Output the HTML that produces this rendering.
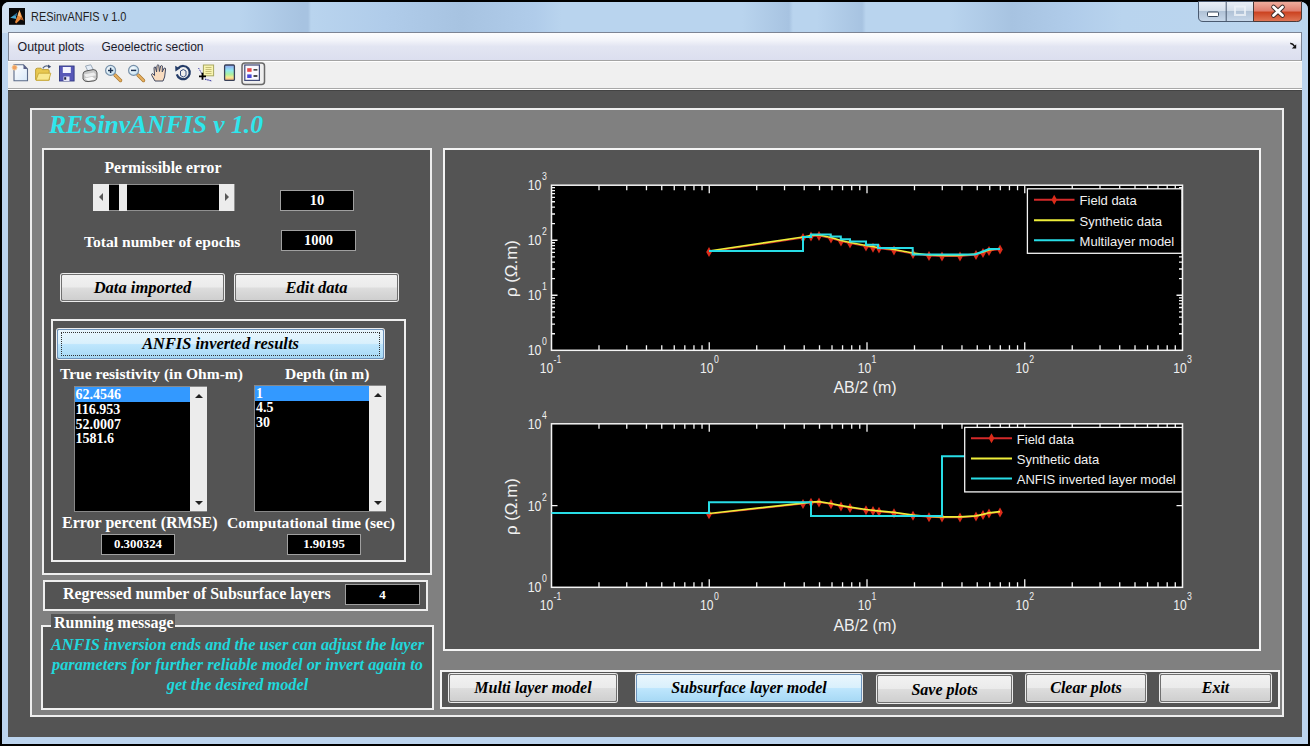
<!DOCTYPE html>
<html><head><meta charset="utf-8">
<style>
*{margin:0;padding:0;box-sizing:border-box}
html,body{width:1310px;height:746px;overflow:hidden;background:#000}
body{position:relative;font-family:"Liberation Sans",sans-serif}
.a{position:absolute}
.serif{font-family:"Liberation Serif",serif;font-weight:bold}
.w{color:#fff}
.btn{position:absolute;border:1px solid #707070;border-radius:2px;box-shadow:0 0 0 1px #ececec;
 background:linear-gradient(#f2f2f2 0%,#ebebeb 48%,#dddddd 52%,#cfcfcf 100%);
 font-family:"Liberation Serif",serif;font-weight:bold;font-style:italic;font-size:16px;color:#000;text-align:center;white-space:nowrap}
.edit{position:absolute;background:#000;border:1px solid #a0a0a0;color:#fff;font-family:"Liberation Serif",serif;font-weight:bold;text-align:center;white-space:nowrap}
.lbl{position:absolute;font-family:"Liberation Serif",serif;font-weight:bold;font-size:16px;color:#fff;white-space:nowrap;line-height:1}
</style></head><body>
<!-- window frame -->
<div class="a" style="left:1.5px;top:1.5px;width:1306.5px;height:742.5px;background:#bcd4ee;border-radius:7px 7px 0 0"></div>
<div class="a" style="left:2px;top:1.5px;width:1306px;height:31px;border-radius:7px 7px 0 0;background:linear-gradient(90deg,#d2e2f2 0px,#c4daf0 60px,#b9d4ee 130px,#b9d4ee 237px,#a7c3e1 300px,#a7c3e1 306px,#b9d4ee 309px,#b0ccea 383px,#a7c3e1 460px,#b0ccea 533px,#b9d4ee 560px,#b9d4ee 740px,#a7c3e1 787px,#b9d4ee 791px,#b9d4ee 815px,#a7c3e1 860px,#b9d4ee 864px,#b9d4ee 947px,#a7c3e1 1010px,#b0ccea 1070px,#b9d4ee 1120px,#bcd6ee 1306px)"></div>
<!-- title -->

<div class="a" style="left:30.5px;top:8.5px;font-size:13.5px;color:#1e1e1e;transform-origin:0 0;transform:scaleX(0.81)">RESinvANFIS v 1.0</div>
<!-- title buttons -->
<svg class="a" style="left:1190px;top:0" width="120" height="60">
<defs>
<linearGradient id="gmin" x1="0" y1="0" x2="0" y2="1"><stop offset="0" stop-color="#eaf0f7"/><stop offset=".45" stop-color="#d4dfeb"/><stop offset=".5" stop-color="#b0c2d6"/><stop offset="1" stop-color="#c8d8ea"/></linearGradient>
<linearGradient id="gcls" x1="0" y1="0" x2="0" y2="1"><stop offset="0" stop-color="#f0b0a0"/><stop offset=".45" stop-color="#e08070"/><stop offset=".55" stop-color="#cc4422"/><stop offset="1" stop-color="#e07858"/></linearGradient>
</defs>
<path d="M8.5 1.5 V17 Q8.5 21.5 13 21.5 H106.5 Q111.5 21.5 111.5 17 V1.5 Z" fill="url(#gmin)" stroke="#4a5a70" stroke-width="1"/>
<path d="M63.5 1.5 V21.5 H106.5 Q111.5 21.5 111.5 17 V1.5 Z" fill="url(#gcls)" stroke="#4a3a38" stroke-width="1"/>
<path d="M36.2 1.5 V21.5" stroke="#4a5a70" stroke-width="1"/>
<rect x="17.5" y="12" width="11" height="4.5" rx="1" fill="#fff" stroke="#3a4a5e" stroke-width="1"/>
<rect x="45" y="6.5" width="10" height="8.5" fill="none" stroke="#eef3f8" stroke-width="2" opacity=".8"/>
<path d="M83.5 7 L92.5 15.5 M92.5 7 L83.5 15.5" stroke="#3a2a28" stroke-width="4.6" stroke-linecap="round"/>
<path d="M83.5 7 L92.5 15.5 M92.5 7 L83.5 15.5" stroke="#ffffff" stroke-width="2.8" stroke-linecap="round"/>
</svg>
<!-- menu bar -->
<div class="a" style="left:8px;top:32px;width:1294px;height:28.5px;border:1px solid #7c8494;border-bottom:1.5px solid #a4a4a4;background:linear-gradient(#fdfdfe 0%,#f4f5fa 25%,#e2e5f2 50%,#dcdfef 100%)"></div>
<div class="a" style="left:17.5px;top:40px;font-size:12.4px;color:#1a1a2a">Output plots</div>
<div class="a" style="left:101.5px;top:40px;font-size:12px;color:#1a1a2a">Geoelectric section</div>
<svg class="a" style="left:1190px;top:0" width="120" height="60"><path d="M100.2 43.5 Q102.5 43 104.6 46.4" fill="none" stroke="#111" stroke-width="1.4"/>
<path d="M106.2 44.2 L106.2 48.6 L101.8 48.6 Z" fill="#111"/>
</svg>
<!-- toolbar -->
<div class="a" style="left:8px;top:60.5px;width:1294px;height:29.5px;background:#f0f0f0;border-top:1.2px solid #fff;border-bottom:1px solid #fff"></div><div class="a" style="left:8px;top:88px;width:1294px;height:1px;background:#a8a8a8"></div>
<div id="icons"><svg class="a" style="left:0;top:0" width="280" height="92">
<defs>
<linearGradient id="gpage" x1="0" y1="0" x2="1" y2="1"><stop offset="0" stop-color="#ffffff"/><stop offset="1" stop-color="#d8e8f8"/></linearGradient>
<linearGradient id="gfold" x1="0" y1="0" x2="0" y2="1"><stop offset="0" stop-color="#fff6b0"/><stop offset="1" stop-color="#e8c848"/></linearGradient>
<linearGradient id="gcb" x1="0" y1="0" x2="0" y2="1"><stop offset="0" stop-color="#8ea0f0"/><stop offset=".35" stop-color="#90e8f0"/><stop offset=".6" stop-color="#a8f0a0"/><stop offset=".8" stop-color="#f8e890"/><stop offset="1" stop-color="#f0a878"/></linearGradient>
<radialGradient id="glens" cx=".4" cy=".4" r=".7"><stop offset="0" stop-color="#ffffff"/><stop offset="1" stop-color="#b8dcf0"/></radialGradient>
</defs>
<!-- MATLAB icon -->
<rect x="9" y="8" width="16" height="16.8" fill="#0a0a0a"/>
<path d="M10.2 17.8 L15.6 14.2 L16.4 19 Z" fill="#4aa8d0"/>
<path d="M13.5 15.6 L17.2 12.4 L16.6 16 Z" fill="#2a6890"/>
<path d="M19.5 10 L23.6 20.6 L20.6 19.2 L16.2 23.4 L15 22.2 L17.6 15.4 Z" fill="#e88838"/>
<path d="M19.5 10 L21 17 L17.6 15.4 Z" fill="#f8c080"/>
<path d="M20.6 19.2 L23.6 20.6 L21 17 Z" fill="#a04818"/>
<!-- new -->
<path d="M14 64.8 H23.5 L27.5 69 V80.8 H14 Z" fill="url(#gpage)" stroke="#5a6a88" stroke-width="1.1"/>
<path d="M23.5 64.8 V69 H27.5 Z" fill="#5a6088"/>
<circle cx="14.6" cy="67.6" r="2.4" fill="#f0a060" stroke="#f8c890" stroke-width="1"/>
<!-- open -->
<path d="M35.6 70 Q35.6 68.2 37.4 68.2 H41 L42.2 69.6 H48 Q49.2 69.6 49.2 71 V80.2 H36.4 Q35.6 80.2 35.6 79 Z" fill="#e8c850" stroke="#b89830" stroke-width="0.9"/>
<path d="M36 80.2 L38.6 73.2 H50.8 L48.8 80.2 Z" fill="#f8e890" stroke="#c8a838" stroke-width="0.9"/>
<path d="M42.8 68.4 Q45 64.6 49 66.4" fill="none" stroke="#5a6a88" stroke-width="1.3"/>
<path d="M48 64.6 L51.2 66.8 L48.2 68.6 Z" fill="#3a4a70"/>
<!-- save -->
<rect x="59.5" y="66" width="14.6" height="15" fill="#5858b8" stroke="#303880" stroke-width="0.9"/>
<rect x="62.8" y="67" width="8" height="6" fill="#f4f4ff"/>
<rect x="63.5" y="76.5" width="6" height="4.5" fill="#e8e8f8"/>
<rect x="64.2" y="77.2" width="2" height="2.5" fill="#202040"/>
<!-- print -->
<path d="M85.5 66 L90.8 64.8 L93.6 70.2 L88 71.4 Z" fill="#e6eef8" stroke="#8898aa" stroke-width="0.8"/>
<path d="M83 74.2 Q83 71.6 86 71 L93.2 69.6 Q96.6 69.4 97 72.8 V77.6 Q97 80.2 94 80.9 L88 81.6 Q84 81.8 83 79 Z" fill="#c8c8c8" stroke="#4a4a4a" stroke-width="0.9"/>
<path d="M84 74.4 L93.8 72.4 L96.2 75.2 L86.2 77.2 Z" fill="#eeeeee"/>
<path d="M84.6 78.4 L92.2 76.8 L95.6 79.2 L88.2 80.8 Z" fill="#fafafa"/>
<!-- zoom in -->
<path d="M115 75 L120.5 80.5" stroke="#a87830" stroke-width="3.4" stroke-linecap="round"/>
<path d="M115 75 L120.5 80.5" stroke="#e8b060" stroke-width="2" stroke-linecap="round"/>
<circle cx="110.6" cy="70.4" r="5" fill="url(#glens)" stroke="#7890a8" stroke-width="1.2"/>
<path d="M108 70.4 H113.2 M110.6 67.8 V73" stroke="#1a3050" stroke-width="1.5"/>
<!-- zoom out -->
<path d="M138 75 L143.5 80.5" stroke="#a87830" stroke-width="3.4" stroke-linecap="round"/>
<path d="M138 75 L143.5 80.5" stroke="#e8b060" stroke-width="2" stroke-linecap="round"/>
<circle cx="133.6" cy="70.4" r="5" fill="url(#glens)" stroke="#7890a8" stroke-width="1.2"/>
<path d="M131 70.4 H136.2" stroke="#1a3050" stroke-width="1.5"/>
<!-- pan hand -->
<path d="M155 81 L151.8 75.5 Q151 73.8 152.6 73.6 L154.6 75.5 L154 68 Q154.2 66.6 155.4 67 L156.6 72 L157 65.6 Q157.6 64.4 158.8 65.2 L159.4 71.5 L160.6 66 Q161.4 65 162.4 66 L162.2 72 L164.2 68 Q165.4 67.6 165.6 69 L164.6 77 L163 81 Z" fill="#f8dcc0" stroke="#404860" stroke-width="1"/>
<!-- rotate -->
<path d="M178.2 68.2 A6.6 6.6 0 1 1 176.8 74.4" fill="none" stroke="#243c68" stroke-width="2.2"/>
<path d="M175.2 65.8 L180 68.6 L175.4 71.6 Z" fill="#243c68"/>
<path d="M180.5 71 L183.3 69.5 L186 71 V75.5 L183.3 77 L180.5 75.5 Z" fill="none" stroke="#3a5080" stroke-width="1"/>
<!-- data cursor -->
<rect x="203.4" y="65" width="10.2" height="10.8" fill="#f8f4b0" stroke="#a8a860" stroke-width="1"/>
<path d="M205.5 67.5 H211.5 M205.5 69.5 H211.5 M205.5 71.5 H211.5 M205.5 73.5 H211.5" stroke="#b0a860" stroke-width="0.7"/>
<path d="M198.5 68 L202 74" stroke="#3838a0" stroke-width="1" stroke-dasharray="1.5 1"/>
<path d="M205 79.2 L212 81" stroke="#3838a0" stroke-width="1.2" stroke-dasharray="1.5 0.8"/>
<path d="M199 76.3 H206 M202.5 72.8 V79.8" stroke="#000" stroke-width="1.8"/>
<!-- colorbar -->
<rect x="224.6" y="65" width="9.8" height="15.4" rx="1" fill="url(#gcb)" stroke="#384058" stroke-width="1.3"/>
<!-- legend toggle -->
<rect x="242" y="63" width="22.5" height="21.4" rx="3" fill="#efefef" stroke="#6a6a6a" stroke-width="1.5"/>
<rect x="244.8" y="65" width="14.6" height="15.4" fill="#fafaff" stroke="#404a78" stroke-width="1.2"/>
<rect x="247.2" y="68.2" width="4.4" height="3.6" fill="#e84848"/>
<rect x="247.2" y="74.4" width="4.4" height="3.6" fill="#4848d8"/>
<path d="M253.5 69.8 H257.4 M253.5 76 H257.4" stroke="#111" stroke-width="1.3"/>
</svg>
</div>
<!-- figure -->
<div class="a" style="left:8px;top:90px;width:1294px;height:647px;background:#545454;border-top:1px solid #444"></div>
<!-- outer panel -->
<div class="a" style="left:30px;top:108px;width:1254px;height:609px;background:#808080;border:2px solid #eeeeee"></div>
<div class="a serif" style="left:49px;top:109.5px;font-size:25.6px;font-style:italic;color:#2ee6ec">RESinvANFIS v 1.0</div>

<!-- left panel -->
<div class="a" style="left:42px;top:148px;width:390px;height:427px;background:#545454;border:2px solid #eeeeee"></div>
<div class="lbl" style="left:104.5px;top:160px;font-size:15.7px">Permissible error</div>
<!-- slider -->
<div class="a" style="left:92.5px;top:183.5px;width:142.5px;height:27.5px;background:#000;border:1px solid #909090"></div>
<div class="a" style="left:93px;top:184px;width:15.5px;height:26.5px;background:#ececec"></div>
<div class="a" style="left:219.3px;top:184px;width:15px;height:26.5px;background:#ececec"></div>
<div class="a" style="left:119.3px;top:184px;width:8px;height:26.5px;background:#eaeaea"></div>
<div class="a" style="left:98.5px;top:193px;width:0;height:0;border-top:4px solid transparent;border-bottom:4px solid transparent;border-right:4.5px solid #585858"></div>
<div class="a" style="left:225px;top:193px;width:0;height:0;border-top:4px solid transparent;border-bottom:4px solid transparent;border-left:4.5px solid #585858"></div>
<div class="edit" style="left:280px;top:190px;width:74px;height:21px;font-size:14.5px;line-height:19px">10</div>
<div class="lbl" style="left:84px;top:234px;font-size:15.6px">Total number of epochs</div>
<div class="edit" style="left:281px;top:230px;width:75px;height:21px;font-size:14.5px;line-height:19px">1000</div>
<div class="btn" style="left:61px;top:274px;width:163px;height:27px;line-height:25px;font-size:16.5px">Data imported</div>
<div class="btn" style="left:235px;top:274px;width:163px;height:27px;line-height:25px;font-size:16.5px">Edit data</div>

<!-- results sub panel -->
<div class="a" style="left:51px;top:319px;width:355px;height:243px;border:2px solid #eeeeee"></div>
<div class="btn" style="left:57px;top:329px;width:327px;height:30px;line-height:28px;font-size:16.4px;border-color:#6e94bc;background:linear-gradient(#eaf6fd 0%,#d9f0fc 48%,#bee6fd 52%,#a7d9f5 100%)">ANFIS inverted results</div>
<div class="a" style="left:61px;top:332px;width:319px;height:24px;border:1px dotted #333"></div>
<div class="lbl" style="left:60px;top:366.3px;font-size:15.55px">True resistivity (in Ohm-m)</div>
<div class="lbl" style="left:285px;top:366.3px;font-size:15.5px">Depth (in m)</div>
<!-- listbox 1 -->
<div class="a" style="left:74px;top:386px;width:133px;height:126px;background:#000;border:1px solid #888"></div>
<div class="a" style="left:75px;top:387px;width:115px;height:15px;background:#3399ff"></div>
<div class="a" style="left:190px;top:387px;width:17px;height:124px;background:#ececec"></div>
<div class="a serif" style="left:75.5px;top:387.7px;font-size:14px;color:#fff;line-height:14.9px">62.4546<br>116.953<br>52.0007<br>1581.6</div>
<!-- listbox 2 -->
<div class="a" style="left:254px;top:385px;width:132px;height:127px;background:#000;border:1px solid #888"></div>
<div class="a" style="left:255px;top:386px;width:114px;height:15px;background:#3399ff"></div>
<div class="a" style="left:369px;top:386px;width:17px;height:125px;background:#ececec"></div>
<div class="a serif" style="left:256px;top:386.5px;font-size:14px;color:#fff;line-height:14.9px">1<br>4.5<br>30</div>
<div class="a" style="left:195px;top:394px;width:0;height:0;border-left:4px solid transparent;border-right:4px solid transparent;border-bottom:4px solid #222"></div>
<div class="a" style="left:195px;top:501px;width:0;height:0;border-left:4px solid transparent;border-right:4px solid transparent;border-top:4px solid #222"></div>
<div class="a" style="left:374px;top:393px;width:0;height:0;border-left:4px solid transparent;border-right:4px solid transparent;border-bottom:4px solid #222"></div>
<div class="a" style="left:374px;top:501px;width:0;height:0;border-left:4px solid transparent;border-right:4px solid transparent;border-top:4px solid #222"></div>
<div class="lbl" style="left:62px;top:515px">Error percent (RMSE)</div>
<div class="lbl" style="left:227px;top:515px;font-size:15.6px">Computational time (sec)</div>
<div class="edit" style="left:101px;top:534px;width:74px;height:21px;font-size:12.8px;line-height:19px">0.300324</div>
<div class="edit" style="left:287px;top:534px;width:74px;height:21px;font-size:12.8px;line-height:19px">1.90195</div>

<!-- regressed panel -->
<div class="a" style="left:43px;top:580px;width:385px;height:31px;background:#545454;border:2px solid #eeeeee"></div>
<div class="lbl" style="left:63px;top:586px;font-size:15.9px">Regressed number of Subsurface layers</div>
<div class="edit" style="left:345px;top:584px;width:75px;height:21px;font-size:13px;line-height:19px">4</div>

<!-- running message -->
<div class="a" style="left:40.5px;top:624.5px;width:393.5px;height:85.5px;background:#545454;border:2px solid #f0f0f0"></div>
<div class="a" style="left:51px;top:614px;width:124px;height:18px;background:#545454"></div>
<div class="lbl" style="left:54px;top:615px">Running message</div>
<div class="a serif" style="left:41px;top:635px;width:393px;text-align:center;font-style:italic;font-size:16.3px;line-height:20px;color:#20d8dc">ANFIS inversion ends and the user can adjust the layer<br>parameters for further reliable model or invert again to<br>get the desired model</div>

<!-- right plot panel -->
<div class="a" style="left:443px;top:148px;width:818px;height:503px;background:#545454;border:2px solid #f4f4f4"></div>

<!-- button panel -->
<div class="a" style="left:440px;top:670px;width:840px;height:39px;background:#545454;border:2px solid #f4f4f4"></div>
<div class="btn" style="left:449px;top:674px;width:168px;height:28px;line-height:26px">Multi layer model</div>
<div class="btn" style="left:636px;top:674px;width:226px;height:28px;line-height:26px;border-color:#6e94bc;background:linear-gradient(#eaf6fd 0%,#d9f0fc 48%,#bee6fd 52%,#a7d9f5 100%)">Subsurface layer model</div>
<div class="btn" style="left:877px;top:675px;width:135px;height:28px;line-height:27px">Save plots</div>
<div class="btn" style="left:1026px;top:674px;width:120px;height:28px;line-height:26px">Clear plots</div>
<div class="btn" style="left:1160px;top:674px;width:111px;height:28px;line-height:26px">Exit</div>

<div id="plots"><svg class="a" style="left:0;top:0" width="1310" height="746"><style>.tk{font-family:"Liberation Sans",sans-serif;font-size:14.6px;fill:#f0f0f0}.sp{font-family:"Liberation Sans",sans-serif;font-size:10px;fill:#f0f0f0}.lg{font-family:"Liberation Sans",sans-serif;font-size:13px;fill:#f0f0f0}.at{font-family:"Liberation Sans",sans-serif;font-size:16px;fill:#f0f0f0}</style><rect x="551.5" y="185.2" width="631.0" height="165.10000000000002" fill="#000"/><path d="M598.99 350.3v-5M598.99 185.2v5M626.77 350.3v-5M626.77 185.2v5M646.47 350.3v-5M646.47 185.2v5M661.76 350.3v-5M661.76 185.2v5M674.25 350.3v-5M674.25 185.2v5M684.81 350.3v-5M684.81 185.2v5M693.96 350.3v-5M693.96 185.2v5M702.03 350.3v-5M702.03 185.2v5M709.25 350.3v-8M709.25 185.2v8M756.74 350.3v-5M756.74 185.2v5M784.52 350.3v-5M784.52 185.2v5M804.22 350.3v-5M804.22 185.2v5M819.51 350.3v-5M819.51 185.2v5M832.00 350.3v-5M832.00 185.2v5M842.56 350.3v-5M842.56 185.2v5M851.71 350.3v-5M851.71 185.2v5M859.78 350.3v-5M859.78 185.2v5M867.00 350.3v-8M867.00 185.2v8M914.49 350.3v-5M914.49 185.2v5M942.27 350.3v-5M942.27 185.2v5M961.97 350.3v-5M961.97 185.2v5M977.26 350.3v-5M977.26 185.2v5M989.75 350.3v-5M989.75 185.2v5M1000.31 350.3v-5M1000.31 185.2v5M1009.46 350.3v-5M1009.46 185.2v5M1017.53 350.3v-5M1017.53 185.2v5M1024.75 350.3v-8M1024.75 185.2v8M1072.24 350.3v-5M1072.24 185.2v5M1100.02 350.3v-5M1100.02 185.2v5M1119.72 350.3v-5M1119.72 185.2v5M1135.01 350.3v-5M1135.01 185.2v5M1147.50 350.3v-5M1147.50 185.2v5M1158.06 350.3v-5M1158.06 185.2v5M1167.21 350.3v-5M1167.21 185.2v5M1175.28 350.3v-5M1175.28 185.2v5M551.5 333.73h3.5M1182.5 333.73h-3.5M551.5 324.04h3.5M1182.5 324.04h-3.5M551.5 317.17h3.5M1182.5 317.17h-3.5M551.5 311.83h3.5M1182.5 311.83h-3.5M551.5 307.48h3.5M1182.5 307.48h-3.5M551.5 303.79h3.5M1182.5 303.79h-3.5M551.5 300.60h3.5M1182.5 300.60h-3.5M551.5 297.78h3.5M1182.5 297.78h-3.5M551.5 295.27h6M1182.5 295.27h-6M551.5 278.70h3.5M1182.5 278.70h-3.5M551.5 269.01h3.5M1182.5 269.01h-3.5M551.5 262.13h3.5M1182.5 262.13h-3.5M551.5 256.80h3.5M1182.5 256.80h-3.5M551.5 252.44h3.5M1182.5 252.44h-3.5M551.5 248.76h3.5M1182.5 248.76h-3.5M551.5 245.57h3.5M1182.5 245.57h-3.5M551.5 242.75h3.5M1182.5 242.75h-3.5M551.5 240.23h6M1182.5 240.23h-6M551.5 223.67h3.5M1182.5 223.67h-3.5M551.5 213.98h3.5M1182.5 213.98h-3.5M551.5 207.10h3.5M1182.5 207.10h-3.5M551.5 201.77h3.5M1182.5 201.77h-3.5M551.5 197.41h3.5M1182.5 197.41h-3.5M551.5 193.72h3.5M1182.5 193.72h-3.5M551.5 190.53h3.5M1182.5 190.53h-3.5M551.5 187.72h3.5M1182.5 187.72h-3.5" stroke="#f4f4f4" stroke-width="1.3" fill="none"/><rect x="551.5" y="185.2" width="631.0" height="165.10000000000002" fill="none" stroke="#f4f4f4" stroke-width="1.5"/><text transform="translate(553.2,372.5) scale(0.83,1)" text-anchor="end" class="tk">10</text><text transform="translate(553.6,362.9) scale(0.87,1)" class="sp">-1</text><text transform="translate(713.5,372.5) scale(0.83,1)" text-anchor="end" class="tk">10</text><text transform="translate(713.9,362.9) scale(0.87,1)" class="sp">0</text><text transform="translate(871.2,372.5) scale(0.83,1)" text-anchor="end" class="tk">10</text><text transform="translate(871.6,362.9) scale(0.87,1)" class="sp">1</text><text transform="translate(1029.0,372.5) scale(0.83,1)" text-anchor="end" class="tk">10</text><text transform="translate(1029.3,362.9) scale(0.87,1)" class="sp">2</text><text transform="translate(1186.7,372.5) scale(0.83,1)" text-anchor="end" class="tk">10</text><text transform="translate(1187.1,362.9) scale(0.87,1)" class="sp">3</text><text transform="translate(541.5,355.3) scale(0.85,1)" text-anchor="end" class="tk">10</text><text transform="translate(542.1,345.4) scale(0.87,1)" class="sp">0</text><text transform="translate(541.5,300.3) scale(0.85,1)" text-anchor="end" class="tk">10</text><text transform="translate(542.1,290.4) scale(0.87,1)" class="sp">1</text><text transform="translate(541.5,245.2) scale(0.85,1)" text-anchor="end" class="tk">10</text><text transform="translate(542.1,235.3) scale(0.87,1)" class="sp">2</text><text transform="translate(541.5,190.2) scale(0.85,1)" text-anchor="end" class="tk">10</text><text transform="translate(542.1,180.3) scale(0.87,1)" class="sp">3</text><rect x="551.5" y="423.8" width="631.0" height="163.49999999999994" fill="#000"/><path d="M598.99 587.3v-5M598.99 423.8v5M626.77 587.3v-5M626.77 423.8v5M646.47 587.3v-5M646.47 423.8v5M661.76 587.3v-5M661.76 423.8v5M674.25 587.3v-5M674.25 423.8v5M684.81 587.3v-5M684.81 423.8v5M693.96 587.3v-5M693.96 423.8v5M702.03 587.3v-5M702.03 423.8v5M709.25 587.3v-8M709.25 423.8v8M756.74 587.3v-5M756.74 423.8v5M784.52 587.3v-5M784.52 423.8v5M804.22 587.3v-5M804.22 423.8v5M819.51 587.3v-5M819.51 423.8v5M832.00 587.3v-5M832.00 423.8v5M842.56 587.3v-5M842.56 423.8v5M851.71 587.3v-5M851.71 423.8v5M859.78 587.3v-5M859.78 423.8v5M867.00 587.3v-8M867.00 423.8v8M914.49 587.3v-5M914.49 423.8v5M942.27 587.3v-5M942.27 423.8v5M961.97 587.3v-5M961.97 423.8v5M977.26 587.3v-5M977.26 423.8v5M989.75 587.3v-5M989.75 423.8v5M1000.31 587.3v-5M1000.31 423.8v5M1009.46 587.3v-5M1009.46 423.8v5M1017.53 587.3v-5M1017.53 423.8v5M1024.75 587.3v-8M1024.75 423.8v8M1072.24 587.3v-5M1072.24 423.8v5M1100.02 587.3v-5M1100.02 423.8v5M1119.72 587.3v-5M1119.72 423.8v5M1135.01 587.3v-5M1135.01 423.8v5M1147.50 587.3v-5M1147.50 423.8v5M1158.06 587.3v-5M1158.06 423.8v5M1167.21 587.3v-5M1167.21 423.8v5M1175.28 587.3v-5M1175.28 423.8v5M551.5 505.55h6M1182.5 505.55h-6" stroke="#f4f4f4" stroke-width="1.3" fill="none"/><rect x="551.5" y="423.8" width="631.0" height="163.49999999999994" fill="none" stroke="#f4f4f4" stroke-width="1.5"/><text transform="translate(553.2,609.5) scale(0.83,1)" text-anchor="end" class="tk">10</text><text transform="translate(553.6,599.9) scale(0.87,1)" class="sp">-1</text><text transform="translate(713.5,609.5) scale(0.83,1)" text-anchor="end" class="tk">10</text><text transform="translate(713.9,599.9) scale(0.87,1)" class="sp">0</text><text transform="translate(871.2,609.5) scale(0.83,1)" text-anchor="end" class="tk">10</text><text transform="translate(871.6,599.9) scale(0.87,1)" class="sp">1</text><text transform="translate(1029.0,609.5) scale(0.83,1)" text-anchor="end" class="tk">10</text><text transform="translate(1029.3,599.9) scale(0.87,1)" class="sp">2</text><text transform="translate(1186.7,609.5) scale(0.83,1)" text-anchor="end" class="tk">10</text><text transform="translate(1187.1,599.9) scale(0.87,1)" class="sp">3</text><text transform="translate(541.5,592.3) scale(0.85,1)" text-anchor="end" class="tk">10</text><text transform="translate(542.1,582.4) scale(0.87,1)" class="sp">0</text><text transform="translate(541.5,510.5) scale(0.85,1)" text-anchor="end" class="tk">10</text><text transform="translate(542.1,500.6) scale(0.87,1)" class="sp">2</text><text transform="translate(541.5,428.8) scale(0.85,1)" text-anchor="end" class="tk">10</text><text transform="translate(542.1,418.9) scale(0.87,1)" class="sp">4</text><polyline points="709.0,252.0 803.0,238.0 811.0,236.5 819.0,236.0 831.0,238.5 841.0,241.5 850.0,243.5 866.0,246.5 873.0,247.7 879.0,248.6 894.0,250.5 913.0,254.0 929.0,256.0 942.0,256.5 960.0,256.5 976.0,255.0 983.0,253.0 989.0,251.0 1000.0,249.5" fill="none" stroke="#d42a2a" stroke-width="1.1" stroke-linejoin="miter"/><path d="M709.0 247.0L711.8 252.0L709.0 257.0L706.2 252.0Z" fill="#dc2c1a"/><path d="M803.0 233.0L805.8 238.0L803.0 243.0L800.2 238.0Z" fill="#dc2c1a"/><path d="M811.0 231.5L813.8 236.5L811.0 241.5L808.2 236.5Z" fill="#dc2c1a"/><path d="M819.0 231.0L821.8 236.0L819.0 241.0L816.2 236.0Z" fill="#dc2c1a"/><path d="M831.0 233.5L833.8 238.5L831.0 243.5L828.2 238.5Z" fill="#dc2c1a"/><path d="M841.0 236.5L843.8 241.5L841.0 246.5L838.2 241.5Z" fill="#dc2c1a"/><path d="M850.0 238.5L852.8 243.5L850.0 248.5L847.2 243.5Z" fill="#dc2c1a"/><path d="M866.0 241.5L868.8 246.5L866.0 251.5L863.2 246.5Z" fill="#dc2c1a"/><path d="M873.0 242.7L875.8 247.7L873.0 252.7L870.2 247.7Z" fill="#dc2c1a"/><path d="M879.0 243.6L881.8 248.6L879.0 253.6L876.2 248.6Z" fill="#dc2c1a"/><path d="M894.0 245.5L896.8 250.5L894.0 255.5L891.2 250.5Z" fill="#dc2c1a"/><path d="M913.0 249.0L915.8 254.0L913.0 259.0L910.2 254.0Z" fill="#dc2c1a"/><path d="M929.0 251.0L931.8 256.0L929.0 261.0L926.2 256.0Z" fill="#dc2c1a"/><path d="M942.0 251.5L944.8 256.5L942.0 261.5L939.2 256.5Z" fill="#dc2c1a"/><path d="M960.0 251.5L962.8 256.5L960.0 261.5L957.2 256.5Z" fill="#dc2c1a"/><path d="M976.0 250.0L978.8 255.0L976.0 260.0L973.2 255.0Z" fill="#dc2c1a"/><path d="M983.0 248.0L985.8 253.0L983.0 258.0L980.2 253.0Z" fill="#dc2c1a"/><path d="M989.0 246.0L991.8 251.0L989.0 256.0L986.2 251.0Z" fill="#dc2c1a"/><path d="M1000.0 244.5L1002.8 249.5L1000.0 254.5L997.2 249.5Z" fill="#dc2c1a"/><polyline points="709.0,251.0 803.0,237.0 811.0,235.5 819.0,235.0 831.0,237.5 841.0,240.5 850.0,242.5 866.0,245.5 878.0,247.5 894.0,249.5 913.0,253.0 929.0,255.0 942.0,255.5 960.0,255.5 976.0,254.0 983.0,252.0 989.0,250.0 1000.0,248.5" fill="none" stroke="#eeee3a" stroke-width="1.7" stroke-linejoin="miter"/><polyline points="709.0,251.0 803.0,251.0 803.0,237.0 811.0,237.0 811.0,234.6 830.7,234.6 830.7,236.5 840.8,236.5 840.8,239.2 850.0,239.2 850.0,241.5 866.0,241.5 866.0,244.7 878.0,244.7 878.0,248.0 912.7,248.0 912.7,254.5 975.0,254.5 989.0,249.0 1000.0,249.0" fill="none" stroke="#28dde6" stroke-width="2" stroke-linejoin="miter"/><polyline points="709.0,514.3 803.0,503.9 811.0,502.8 819.0,502.4 831.0,504.3 841.0,506.5 850.0,508.0 866.0,510.2 873.0,511.1 879.0,511.8 894.0,513.2 913.0,515.8 929.0,517.3 942.0,517.6 960.0,517.6 976.0,516.5 983.0,515.0 989.0,513.5 1000.0,512.4" fill="none" stroke="#d42a2a" stroke-width="1.1" stroke-linejoin="miter"/><path d="M709.0 509.3L711.8 514.3L709.0 519.3L706.2 514.3Z" fill="#dc2c1a"/><path d="M803.0 498.9L805.8 503.9L803.0 508.9L800.2 503.9Z" fill="#dc2c1a"/><path d="M811.0 497.8L813.8 502.8L811.0 507.8L808.2 502.8Z" fill="#dc2c1a"/><path d="M819.0 497.4L821.8 502.4L819.0 507.4L816.2 502.4Z" fill="#dc2c1a"/><path d="M831.0 499.3L833.8 504.3L831.0 509.3L828.2 504.3Z" fill="#dc2c1a"/><path d="M841.0 501.5L843.8 506.5L841.0 511.5L838.2 506.5Z" fill="#dc2c1a"/><path d="M850.0 503.0L852.8 508.0L850.0 513.0L847.2 508.0Z" fill="#dc2c1a"/><path d="M866.0 505.2L868.8 510.2L866.0 515.2L863.2 510.2Z" fill="#dc2c1a"/><path d="M873.0 506.1L875.8 511.1L873.0 516.1L870.2 511.1Z" fill="#dc2c1a"/><path d="M879.0 506.8L881.8 511.8L879.0 516.8L876.2 511.8Z" fill="#dc2c1a"/><path d="M894.0 508.2L896.8 513.2L894.0 518.2L891.2 513.2Z" fill="#dc2c1a"/><path d="M913.0 510.8L915.8 515.8L913.0 520.8L910.2 515.8Z" fill="#dc2c1a"/><path d="M929.0 512.3L931.8 517.3L929.0 522.3L926.2 517.3Z" fill="#dc2c1a"/><path d="M942.0 512.6L944.8 517.6L942.0 522.6L939.2 517.6Z" fill="#dc2c1a"/><path d="M960.0 512.6L962.8 517.6L960.0 522.6L957.2 517.6Z" fill="#dc2c1a"/><path d="M976.0 511.5L978.8 516.5L976.0 521.5L973.2 516.5Z" fill="#dc2c1a"/><path d="M983.0 510.0L985.8 515.0L983.0 520.0L980.2 515.0Z" fill="#dc2c1a"/><path d="M989.0 508.5L991.8 513.5L989.0 518.5L986.2 513.5Z" fill="#dc2c1a"/><path d="M1000.0 507.4L1002.8 512.4L1000.0 517.4L997.2 512.4Z" fill="#dc2c1a"/><polyline points="709.0,513.5 803.0,503.1 811.0,502.0 819.0,501.7 831.0,503.5 841.0,505.7 850.0,507.2 866.0,509.5 878.0,510.9 894.0,512.4 913.0,515.0 929.0,516.5 942.0,516.9 960.0,516.9 976.0,515.8 983.0,514.3 989.0,512.8 1000.0,511.7" fill="none" stroke="#eeee3a" stroke-width="1.7" stroke-linejoin="miter"/><polyline points="551.5,513.0 709.0,513.0 709.0,502.2 811.0,502.2 811.0,516.0 942.0,516.0 942.0,456.3 1182.5,456.3" fill="none" stroke="#28dde6" stroke-width="2" stroke-linejoin="miter"/><rect x="1027.4" y="188.8" width="154.5" height="64.5" fill="#000" stroke="#f4f4f4" stroke-width="1.3"/><path d="M1034 199.7H1074.5" stroke="#d42a2a" stroke-width="2"/><path d="M1054.2 194.7L1057.0 199.7L1054.2 204.7L1051.5 199.7Z" fill="#dc2c1a"/><text x="1079.6" y="205.3" class="lg">Field data</text><path d="M1034 220.2H1074.5" stroke="#eeee3a" stroke-width="2"/><text x="1079.6" y="225.8" class="lg">Synthetic data</text><path d="M1034 240.3H1074.5" stroke="#28dde6" stroke-width="2"/><text x="1079.6" y="245.9" class="lg">Multilayer model</text><rect x="964.7" y="427.4" width="217.5999999999999" height="64.5" fill="#000" stroke="#f4f4f4" stroke-width="1.3"/><path d="M971 438.3H1012" stroke="#d42a2a" stroke-width="2"/><path d="M991.5 433.3L994.3 438.3L991.5 443.3L988.7 438.3Z" fill="#dc2c1a"/><text x="1016.8" y="443.9" class="lg">Field data</text><path d="M971 458.5H1012" stroke="#eeee3a" stroke-width="2"/><text x="1016.8" y="464.1" class="lg">Synthetic data</text><path d="M971 478.4H1012" stroke="#28dde6" stroke-width="2"/><text x="1016.8" y="484.0" class="lg">ANFIS inverted layer model</text><text x="865" y="393.3" text-anchor="middle" class="at">AB/2 (m)</text><text x="865" y="630.5" text-anchor="middle" class="at">AB/2 (m)</text><text transform="translate(516.8,268.6) rotate(-90)" text-anchor="middle" class="at" style="font-size:16.9px">ρ (Ω.m)</text><text transform="translate(516.8,506.6) rotate(-90)" text-anchor="middle" class="at" style="font-size:16.9px">ρ (Ω.m)</text></svg></div>
</body></html>
